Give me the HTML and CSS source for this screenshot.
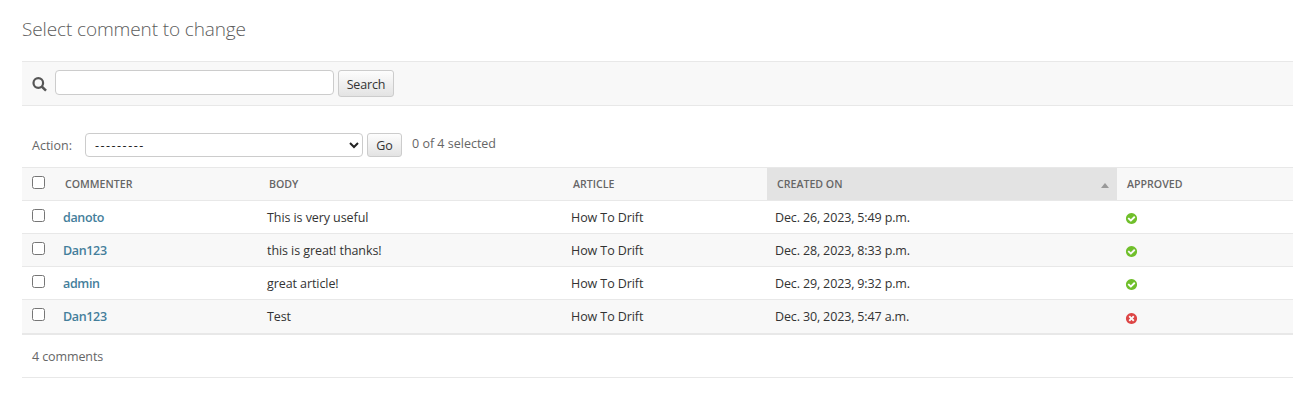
FILE: index.html
```
<!DOCTYPE html>
<html lang="en">
<head>
<meta charset="utf-8">
<title>Select comment to change</title>
<link rel="stylesheet" href="styles.css">
</head>
<body>
<svg class="defs" width="0" height="0">
  <symbol id="yes" viewBox="0 0 1792 1792"><path fill="#70bf2b" d="M1412 734q0-28-18-46l-91-90q-19-19-45-19t-45 19l-408 407-226-226q-19-19-45-19t-45 19l-91 90q-18 18-18 46 0 27 18 45l362 362q19 19 45 19 27 0 46-19l543-543q18-18 18-45zm252 162q0 209-103 385.500t-279.500 279.500-385.500 103-385.500-103-279.500-279.500-103-385.500 103-385.500 279.500-279.500 385.500-103 385.500 103 279.500 279.500 103 385.500z"/></symbol>
  <symbol id="no" viewBox="0 0 1792 1792"><path fill="#dd4646" d="M1277 1122q0-26-19-45l-181-181 181-181q19-19 19-45 0-27-19-46l-90-90q-19-19-46-19-26 0-45 19l-181 181-181-181q-19-19-45-19-27 0-46 19l-90 90q-19 19-19 46 0 26 19 45l181 181-181 181q-19 19-19 45 0 27 19 46l90 90q19 19 46 19 26 0 45-19l181-181 181 181q19 19 45 19 27 0 46-19l90-90q19-19 19-46zm387-226q0 209-103 385.500t-279.500 279.500-385.500 103-385.500-103-279.500-279.500-103-385.500 103-385.500 279.500-279.500 385.500-103 385.500 103 279.500 279.500 103 385.500z"/></symbol>
</svg>
<main class="content">
  <h1 class="title"><span>Select comment to change</span></h1>
  <form class="toolbar">
    <svg class="search-icon" viewBox="0 0 15 15"><circle cx="6.300" cy="6" r="4.800" fill="none" stroke="#555" stroke-width="2.2"/><path d="M9.700 9.500L14 13.600" stroke="#555" stroke-width="2.500"/></svg>
    <input class="search-input" type="text" aria-label="Search">
    <button class="button search-button" type="button">Search</button>
  </form>
  <div class="actions">
    <span class="action-label">Action:</span>
    <select class="action-select" aria-label="Action"><option>---------</option></select>
    <button class="button go-button" type="button">Go</button>
    <span class="counter">0 of 4 selected</span>
  </div>
  <table class="results">
    <colgroup><col class="c-check"><col class="c-name"><col class="c-body"><col class="c-article"><col class="c-date"><col></colgroup>
    <thead>
      <tr><th><input type="checkbox"></th><th>COMMENTER</th><th>BODY</th><th>ARTICLE</th><th class="sorted"><div class="sort-head"><span>CREATED ON</span><svg class="arrow" viewBox="0 0 8 5"><path d="M4 0L8 5H0z" fill="#999"/></svg></div></th><th>APPROVED</th></tr>
    </thead>
    <tbody>
      <tr><td><input type="checkbox"></td><td class="name">danoto</td><td>This is very useful</td><td>How To Drift</td><td class="date">Dec. 26, 2023, 5:49 p.m.</td><td><svg class="status"><use href="#yes"/></svg></td></tr>
      <tr><td><input type="checkbox"></td><td class="name">Dan123</td><td>this is great! thanks!</td><td>How To Drift</td><td class="date">Dec. 28, 2023, 8:33 p.m.</td><td><svg class="status"><use href="#yes"/></svg></td></tr>
      <tr><td><input type="checkbox"></td><td class="name">admin</td><td>great article!</td><td>How To Drift</td><td class="date">Dec. 29, 2023, 9:32 p.m.</td><td><svg class="status"><use href="#yes"/></svg></td></tr>
      <tr class="last"><td><input type="checkbox"></td><td class="name">Dan123</td><td>Test</td><td>How To Drift</td><td class="date">Dec. 30, 2023, 5:47 a.m.</td><td><svg class="status"><use href="#no"/></svg></td></tr>
    </tbody>
  </table>
  <p class="paginator">4 comments</p>
</main>
</body>
</html>
```
FILE: styles.css
```
* { box-sizing: border-box; }
body { margin: 0; background: #fff; color: #333; font: 12.5px/17px "Open Sans", "Noto Sans", sans-serif; }
.defs { display: block; }
.content { padding: 0 22px; }
.title { margin: 0; height: 61px; padding-top: 17px; font-size: 19px; line-height: 24px; font-weight: 300; letter-spacing: -0.12px; color: #5c5c5c; }
.toolbar { display: flex; align-items: flex-start; height: 45px; padding: 8px 10px; background: #f8f8f8; border-top: 1px solid #e8e8e8; border-bottom: 1px solid #e8e8e8; }
.search-icon { width: 15px; height: 15px; margin: 7px 8px 0 0; }
.search-input { width: 279px; height: 25px; margin: 0 4px 0 0; border: 1px solid #ccc; border-radius: 4px; background: #fff; }
.button { padding: 0; border: 1px solid #ccc; border-radius: 3px; background: linear-gradient(#fdfdfd, #e3e3e3); color: #333; font: inherit; }
.search-button { width: 56px; height: 27px; padding-top: 2px; letter-spacing: -0.15px; }
.actions { display: flex; align-items: flex-start; height: 61px; padding: 27px 10px 0; color: #666; }
.action-label { width: 53px; padding-top: 4px; }
.action-select { width: 278px; height: 24px; padding: 0 5px; margin: 0 4px 0 0; border: 1px solid #ccc; border-radius: 4px; background: #fff; color: #222; font: inherit; letter-spacing: 1.5px; }
.go-button { width: 35px; height: 24px; }
.counter { padding: 2px 0 0 10px; }
.results { width: 1271px; table-layout: fixed; border-collapse: separate; border-spacing: 0; }
.c-check { width: 33px; }
.c-name { width: 204px; }
.c-body { width: 304px; }
.c-article { width: 204px; }
.c-date { width: 350px; }
th, td { padding: 0; vertical-align: top; text-align: left; white-space: nowrap; }
th { height: 34px; padding: 8px 10px 0; background: #f8f8f8; border-top: 1px solid #e8e8e8; border-bottom: 1px solid #e8e8e8; color: #666; font-size: 10.600px; line-height: 16px; font-weight: 600; }
.sorted { padding-right: 8px; background: #e3e3e3; }
.sort-head { display: flex; align-items: center; justify-content: space-between; }
.arrow { width: 8px; height: 5px; margin-top: 2px; }
td { height: 33px; padding: 8px 8px 0; border-bottom: 1px solid #e8e8e8; letter-spacing: -0.08px; }
tr:nth-child(even) td { background: #f8f8f8; }
.last td { height: 35px; border-bottom-width: 2px; }
td:first-child { padding-left: 10px; }
input[type="checkbox"] { display: block; width: 13px; height: 13px; margin: 0; }
.name { font-weight: 600; color: #447e9b; letter-spacing: -0.35px; }
.date { letter-spacing: -0.14px; }
.status { display: block; width: 13px; height: 13px; margin-top: 3px; }
.last .status { margin-top: 4px; }
.paginator { margin: 0; height: 43px; padding: 13px 10px 0; border-bottom: 1px solid #e8e8e8; color: #666; letter-spacing: -0.1px; }
```
